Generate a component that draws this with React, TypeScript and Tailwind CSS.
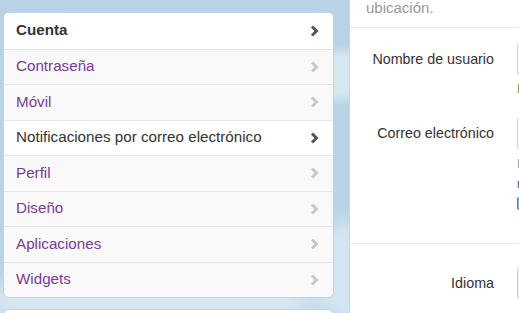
import { ReactNode } from "react";

const menu = [
  { label: "Cuenta", active: true, bold: true },
  { label: "Contraseña" },
  { label: "Móvil" },
  { label: "Notificaciones por correo electrónico", active: true },
  { label: "Perfil" },
  { label: "Diseño" },
  { label: "Aplicaciones" },
  { label: "Widgets" },
];

function Chevron({ dark }: { dark?: boolean }) {
  return (
    <svg width="9" height="12" viewBox="0 0 9 12" className="shrink-0">
      <polyline
        points="2,1.5 6.5,6 2,10.5"
        fill="none"
        stroke={dark ? "#555" : "#c8c8c8"}
        strokeWidth="3"
      />
    </svg>
  );
}

function Row({ label, children }: { label: string; children: ReactNode }) {
  return (
    <div className="flex">
      <div className="w-[167px] shrink-0 pr-[23px] text-right text-[14.3px] text-[#333] leading-[33px]">
        {label}
      </div>
      <div className="flex-1">{children}</div>
    </div>
  );
}

export default function App() {
  return (
    <div
      className="w-[519px] h-[313px] overflow-hidden flex gap-[15px] pl-[3px] bg-[#b9d3e6] bg-[radial-gradient(ellipse_60px_30px_at_340px_75px,#d6e7f1_60%,transparent_100%),radial-gradient(ellipse_200px_40px_at_150px_300px,#d5e6f0_70%,transparent_100%),radial-gradient(ellipse_40px_60px_at_345px_270px,#d3e5f0_60%,transparent_100%)]"
      style={{ fontFamily: '"Liberation Sans", Arial, sans-serif' }}
    >
      {/* Settings menu */}
      <div className="w-[331px] shrink-0 pt-[12px] flex flex-col gap-[11px]">
        <div className="shrink-0 rounded-[6px] border border-[#c5d3de] bg-[#f9f9f9] overflow-hidden">
          {menu.map((m, i) => (
            <div
              key={m.label}
              className={`h-[35.5px] flex items-center justify-between pl-[12px] pr-[14px] text-[15.2px] ${
                i > 0 ? "border-t border-[#e6e6e6]" : ""
              } ${m.active ? "bg-white text-[#333]" : "text-[#7b3a96]"} ${m.bold ? "font-bold" : ""}`}
            >
              <span>{m.label}</span>
              <Chevron dark={m.active} />
            </div>
          ))}
        </div>
        <div className="shrink-0 h-[40px] rounded-[6px] border border-[#c5d3de] bg-white" />
      </div>

      {/* Account form */}
      <div className="w-[560px] shrink-0 bg-white border-l border-[#c9d6df]">
        <div className="h-[28px] border-b border-[#e8e8e8] pl-[16px] text-[15px] text-[#999] leading-[16px]">
          ubicación.
        </div>
        <div className="pt-[15px]">
          <Row label="Nombre de usuario">
            <div className="w-[220px] h-[33px] rounded-[4px] border border-[#ccc]" />
            <div className="mt-[5px] text-[13px] text-[#6a9a3a] leading-[16px]">Hay disponible</div>
          </Row>
        </div>
        <div className="pt-[20px]">
          <Row label="Correo electrónico">
            <div className="w-[220px] h-[33px] rounded-[4px] border border-[#ccc]" />
            <div className="mt-[4px] text-[13px] text-[#999] leading-[20px]">El correo no se mostrará</div>
            <div className="text-[13px] text-[#7b3a96] leading-[20px]">nuevo correo</div>
            <div className="mt-[3px] w-[13px] h-[13px] rounded-[2px] border border-[#4a7fb5] bg-[#8fb6e0]" />
          </Row>
        </div>
        <div className="mt-[33px] border-t border-[#e8e8e8] pt-[23px]">
          <Row label="Idioma">
            <div className="w-[120px] h-[33px] rounded-[4px] border border-[#ccc] bg-[#f4f4f4]" />
          </Row>
        </div>
      </div>
    </div>
  );
}
